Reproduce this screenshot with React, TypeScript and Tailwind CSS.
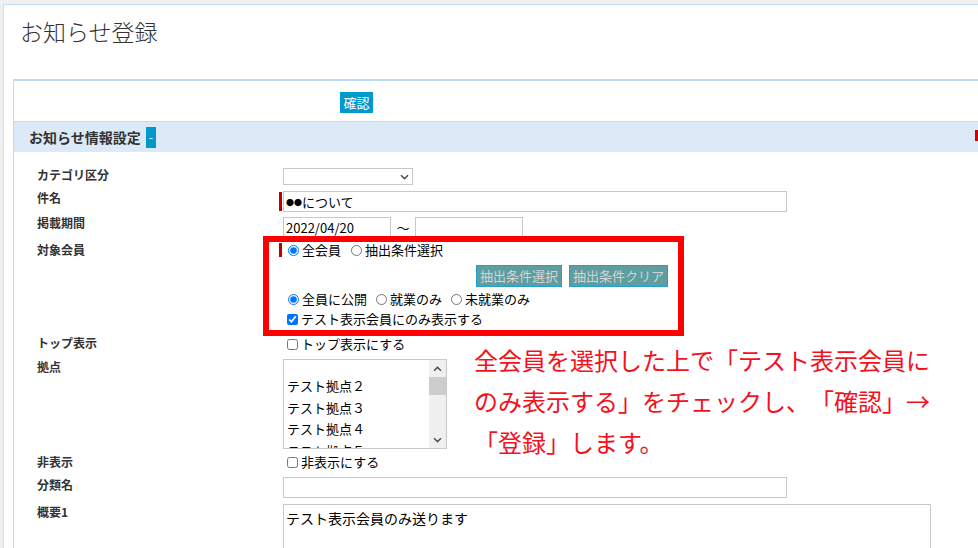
import React from "react";

const font = { fontFamily: '"Noto Sans CJK JP", "Noto Sans", sans-serif' };

function Row({
  label,
  h,
  labelTop,
  children,
}: {
  label: string;
  h: string;
  labelTop: string;
  children?: React.ReactNode;
}) {
  return (
    <div className={`flex items-start ${h}`}>
      <div className={`w-[246px] shrink-0 text-[12px] leading-[18px] font-bold text-[#333] ${labelTop}`}>
        {label}
      </div>
      <div className="flex-1 min-w-0">{children}</div>
    </div>
  );
}

function Radio({ checked, label }: { checked?: boolean; label: string }) {
  return (
    <label className="flex items-center gap-[3px] text-[13px] leading-[14px] text-black">
      <input type="radio" readOnly checked={!!checked} className="m-0 w-[11px] h-[11px]" />
      <span>{label}</span>
    </label>
  );
}

function Check({ checked, label }: { checked?: boolean; label: string }) {
  return (
    <label className="flex items-center gap-[3px] pl-[4px] text-[13px] leading-[18px] text-black">
      <input type="checkbox" readOnly checked={!!checked} className="m-0 w-[11px] h-[11px]" />
      <span>{label}</span>
    </label>
  );
}

const chevron = (dir: "up" | "down") => (
  <svg width="9" height="6" viewBox="0 0 9 6" className="block">
    <path
      d={dir === "down" ? "M1 1.2 L4.5 4.6 L8 1.2" : "M1 4.8 L4.5 1.4 L8 4.8"}
      fill="none"
      stroke="#505050"
      strokeWidth="1.5"
    />
  </svg>
);

export default function App() {
  return (
    <div className="relative w-[978px] h-[548px] overflow-hidden bg-[#f0f0f0]" style={font}>
      <div className="mt-[4px] ml-[3px] h-[600px] bg-white border-t border-l border-[#c2dff5]">
        {/* page title */}
        <div className="h-[74px] pt-[11px] pl-[16px] text-[23px] leading-[30px] font-light text-[#333]">
          お知らせ登録
        </div>

        <div className="ml-[9px] w-[1100px] border-t-2 border-l border-[#bcdcf4]">
          <div className="h-[40px] pt-[8px] pl-[326px]">
            <button className="h-[21px] w-[33px] bg-[#0099cc] text-white text-[13px] leading-[21px]">
              確認
            </button>
          </div>

          <div className="relative h-[31px] border-t border-[#c5dbea] bg-[#dceaf7] flex items-center pl-[15px] gap-[5px]">
            <span className="text-[14px] font-bold text-[#333]">お知らせ情報設定</span>
            <span className="h-[21px] w-[10px] bg-[#0099cc] text-white text-[12px] leading-[20px] text-center">
              -
            </span>
            <span className="absolute left-[961px] top-[8px] w-[3px] h-[11px] bg-[#d40000]" />
          </div>

          <div className="pt-[13px] pl-[23px]">
            <Row label="カテゴリ区分" h="h-[24px]" labelTop="mt-[1px]">
              <div className="mt-[3px] h-[17px] w-[130px] border border-[#c8c8c8] flex items-center justify-end pr-[3px]">
                {chevron("down")}
              </div>
            </Row>

            <Row label="件名" h="h-[25px]" labelTop="mt-0">
              <div className="relative mt-[2px]">
                <span className="absolute left-[-4px] top-[1px] w-[3px] h-[19px] bg-[#c00000]" />
                <div className="h-[21px] w-[504px] border border-[#c8c8c8] pl-[2px] text-[13px] leading-[19px] text-black">
                  <span className="text-[8px] align-[1px]">●●</span>について
                </div>
              </div>
            </Row>

            <Row label="掲載期間" h="h-[26px]" labelTop="mt-0">
              <div className="mt-[3px] flex items-center">
                <div className="h-[21px] w-[108px] border border-[#c8c8c8] pl-[2px] text-[13px] leading-[19px] text-black">
                  2022/04/20
                </div>
                <span className="w-[24px] text-center text-[13px] text-black">～</span>
                <div className="h-[21px] w-[108px] border border-[#c8c8c8]" />
              </div>
            </Row>

            <Row label="対象会員" h="h-[94px]" labelTop="mt-[1px]">
              <div className="relative mt-[3px]">
                <span className="absolute left-[-4px] top-0 w-[3px] h-[14px] bg-[#c00000]" />
                <div className="flex items-center gap-[10px] pl-[5px]">
                  <Radio checked label="全会員" />
                  <Radio label="抽出条件選択" />
                </div>
                <div className="mt-[8px] w-[385px] flex justify-end gap-[7px]">
                  <button className="h-[22px] px-[3px] bg-[#5f9ea0] border border-[#1fa0cf] text-[#d4d4d4] text-[13px] leading-[20px]">
                    抽出条件選択
                  </button>
                  <button className="h-[22px] px-[3px] bg-[#5f9ea0] border border-[#1fa0cf] text-[#d4d4d4] text-[13px] leading-[20px]">
                    抽出条件クリア
                  </button>
                </div>
                <div className="mt-[5px] flex items-center gap-[9px] pl-[5px]">
                  <Radio checked label="全員に公開" />
                  <Radio label="就業のみ" />
                  <Radio label="未就業のみ" />
                </div>
                <div className="mt-[4px]">
                  <Check checked label="テスト表示会員にのみ表示する" />
                </div>
              </div>
            </Row>

            <Row label="トップ表示" h="h-[23px]" labelTop="mt-0">
              <div className="mt-[1px]">
                <Check label="トップ表示にする" />
              </div>
            </Row>

            <Row label="拠点" h="h-[95px]" labelTop="mt-[1px]">
              <div className="mt-[2px] h-[90px] w-[164px] border border-[#c8c8c8] flex overflow-hidden">
                <div className="flex-1 pt-[15px] pl-[3px] text-[13px] text-black">
                  {["テスト拠点２", "テスト拠点３", "テスト拠点４", "テスト拠点５"].map((t) => (
                    <div key={t} className="h-[21.5px] leading-[21.5px] whitespace-nowrap">
                      {t}
                    </div>
                  ))}
                </div>
                <div className="w-[17px] bg-[#f0f0f0] flex flex-col items-center">
                  <div className="h-[17px] flex items-center">{chevron("up")}</div>
                  <div className="w-full h-[18px] bg-[#cdcdcd]" />
                  <div className="flex-1" />
                  <div className="h-[17px] flex items-center">{chevron("down")}</div>
                </div>
              </div>
            </Row>

            <Row label="非表示" h="h-[22px]" labelTop="mt-[1px]">
              <div className="mt-[1px]">
                <Check label="非表示にする" />
              </div>
            </Row>

            <Row label="分類名" h="h-[27px]" labelTop="mt-[2px]">
              <div className="mt-[3px] h-[21px] w-[504px] border border-[#c8c8c8]" />
            </Row>

            <Row label="概要1" h="h-[80px]" labelTop="mt-[2px]">
              <div className="mt-[3px] h-[70px] w-[648px] border border-[#c8c8c8] pl-[2px] pt-[2px] text-[14px] leading-[22px] text-black">
                テスト表示会員のみ送ります
              </div>
            </Row>
          </div>
        </div>
      </div>

      {/* annotation overlay */}
      <div className="absolute left-[263px] top-[236px] w-[421px] h-[100px] border-[6px] border-[#ff0000]" />
      <div className="absolute left-[474px] top-[339px] text-[24px] leading-[41px] text-[#f5101c] whitespace-nowrap [text-spacing-trim:space-all]">
        全会員を選択した上で「テスト表示会員に
        <br />
        のみ表示する」をチェックし、「確認」→
        <br />
        「登録」します。
      </div>
    </div>
  );
}
